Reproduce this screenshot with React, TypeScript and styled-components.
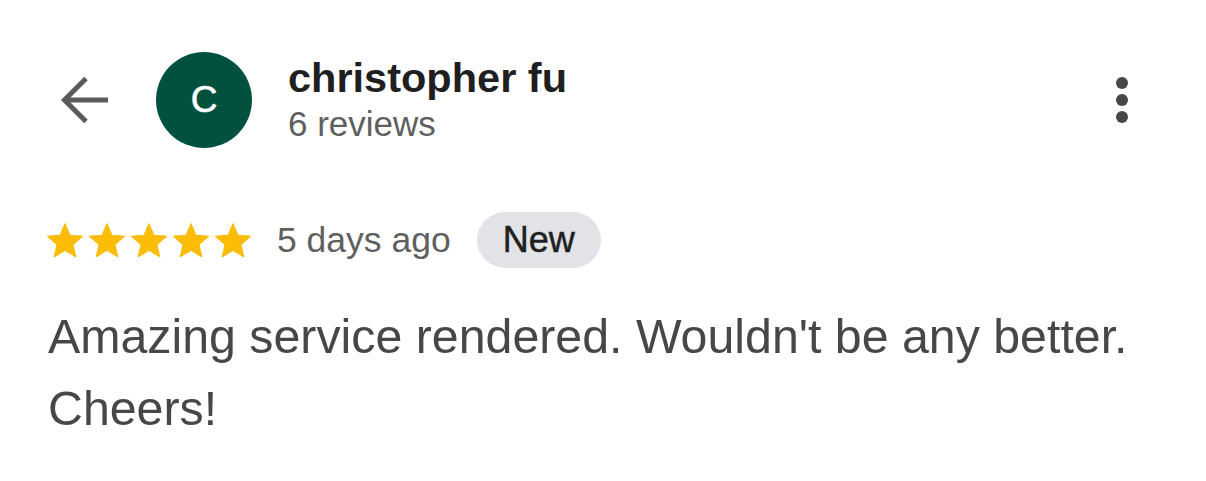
import React from "react";
import styled, { createGlobalStyle } from "styled-components";

const GlobalStyle = createGlobalStyle`
  html, body {
    margin: 0;
    padding: 0;
    background: #ffffff;
  }
  body {
    font-family: "Liberation Sans", Arial, Helvetica, sans-serif;
  }
`;

const STAR_PATH =
  "M12 17.27L18.18 21l-1.64-7.03L22 9.24l-7.19-.61L12 2 9.19 8.63 2 9.24l5.46 4.73L5.82 21z";

function BackArrow() {
  return (
    <svg width="48" height="48" viewBox="0 0 48 48" fill="none">
      <path d="M5 24H48" stroke="#5b5b5b" strokeWidth="5" />
      <path
        d="M26 2.5L4.5 24L26 45.5"
        stroke="#5b5b5b"
        strokeWidth="5"
        strokeLinejoin="miter"
      />
    </svg>
  );
}

function Star() {
  return (
    <svg width="36" height="35" viewBox="1.7 1.7 20.6 19.9">
      <path
        d={STAR_PATH}
        fill="#fbbc04"
        stroke="#fbbc04"
        strokeWidth="0.6"
        strokeLinejoin="round"
      />
    </svg>
  );
}

export default function App() {
  const rating = 5;
  return (
    <>
      <GlobalStyle />
      <Page>
        <Header>
          <BackButton aria-label="Back">
            <BackArrow />
          </BackButton>
          <Avatar>C</Avatar>
          <Author>
            <Name>christopher fu</Name>
            <ReviewCount>6 reviews</ReviewCount>
          </Author>
          <MoreButton aria-label="More">
            <Dot />
            <Dot />
            <Dot />
          </MoreButton>
        </Header>

        <Meta>
          <Stars>
            {Array.from({ length: rating }).map((_, i) => (
              <Star key={i} />
            ))}
          </Stars>
          <When>5 days ago</When>
          <Badge>New</Badge>
        </Meta>

        <Body>
          Amazing service rendered. Wouldn't be any better. Cheers!
        </Body>
      </Page>
    </>
  );
}

const Page = styled.div`
  width: 1206px;
  height: 481px;
  box-sizing: border-box;
  padding: 52px 48px 0 48px;
  overflow: hidden;
`;

const Header = styled.div`
  display: flex;
  align-items: center;
  height: 96px;
  padding-left: 12px;
  padding-right: 30px;
`;

const BackButton = styled.div`
  width: 48px;
  height: 48px;
  display: flex;
  margin-right: 48px;

  svg {
    display: block;
  }
`;

const Avatar = styled.div`
  width: 96px;
  height: 96px;
  border-radius: 50%;
  background: #02513f;
  color: #ffffff;
  display: flex;
  align-items: center;
  justify-content: center;
  font-size: 37px;
  font-weight: 400;
  -webkit-text-stroke: 0.6px #ffffff;
  margin-right: 36px;
  flex-shrink: 0;
`;

const Author = styled.div`
  display: flex;
  flex-direction: column;
`;

const Name = styled.div`
  font-size: 41.5px;
  line-height: 44px;
  font-weight: 700;
  color: #1f1f1f;
`;

const ReviewCount = styled.div`
  font-size: 35px;
  line-height: 41px;
  margin-top: 3px;
  color: #5f5f5f;
`;

const MoreButton = styled.div`
  margin-left: auto;
  display: flex;
  flex-direction: column;
  align-items: center;
  gap: 5px;
`;

const Dot = styled.span`
  width: 12px;
  height: 12px;
  border-radius: 50%;
  background: #474747;
`;

const Meta = styled.div`
  display: flex;
  align-items: center;
  height: 56px;
  margin-top: 64px;
`;

const Stars = styled.div`
  display: flex;
  gap: 6px;
  margin-left: -1px;
  margin-right: 26px;

  svg {
    display: block;
  }
`;

const When = styled.span`
  font-size: 35.5px;
  line-height: 40px;
  color: #5f5f5f;
  margin-right: 26px;
`;

const Badge = styled.span`
  height: 56px;
  box-sizing: border-box;
  padding: 0 26px;
  border-radius: 28px;
  background: #e1e3e6;
  color: #1f1f1f;
  font-size: 36px;
  line-height: 56px;
  -webkit-text-stroke: 0.5px #1f1f1f;
`;

const Body = styled.p`
  margin: 32px 0 0 0;
  font-size: 48.3px;
  line-height: 72px;
  color: #474747;
`;
